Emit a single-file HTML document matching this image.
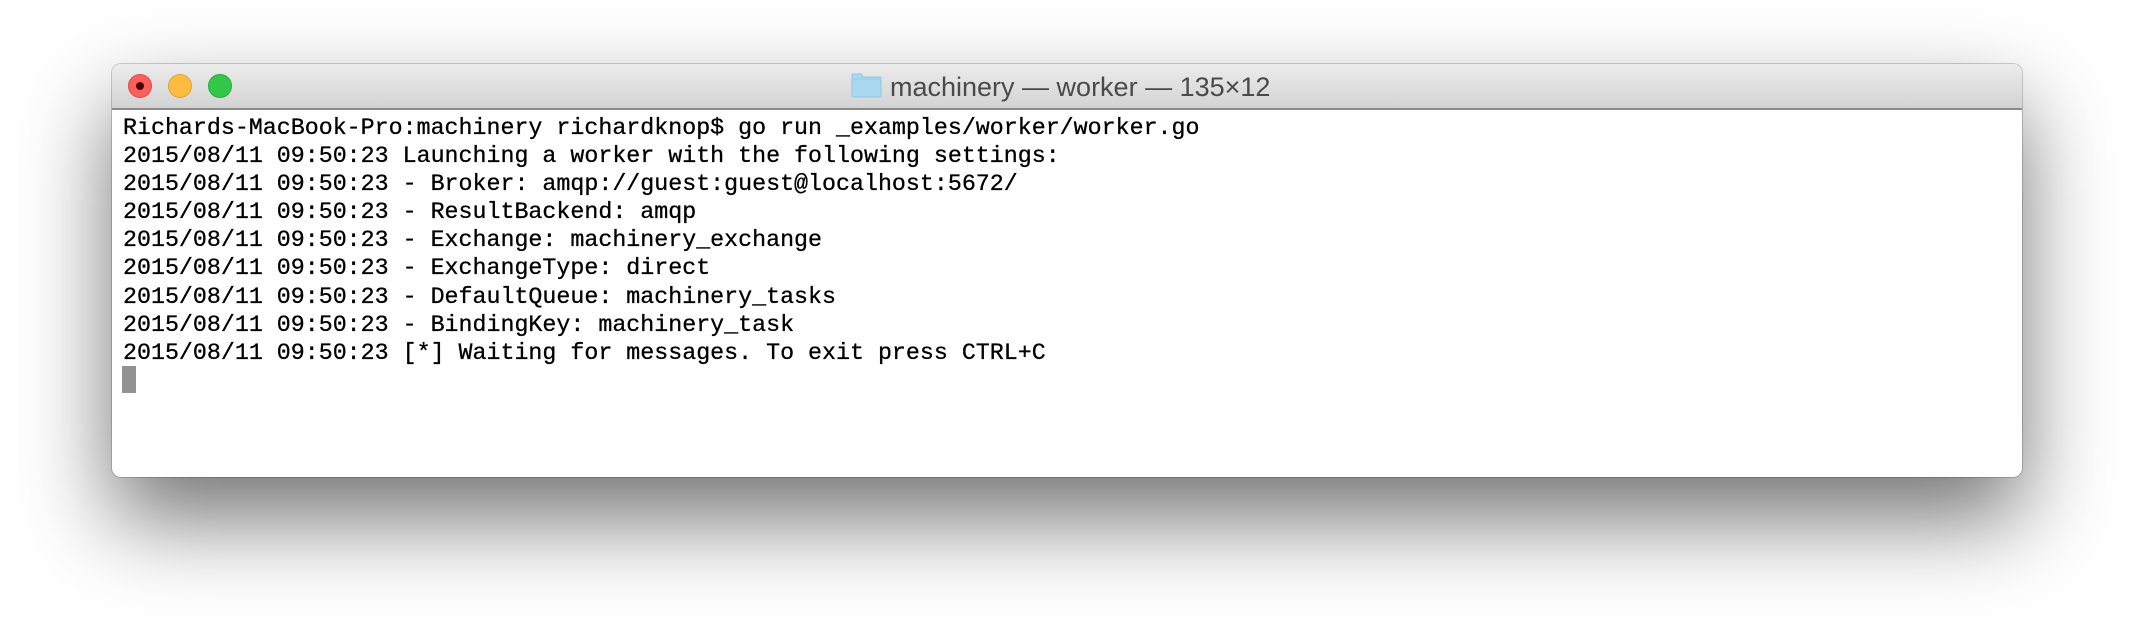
<!DOCTYPE html>
<html><head><meta charset="utf-8"><style>
html,body{margin:0;padding:0;width:2134px;height:638px;background:#fff;overflow:hidden}
.win{position:absolute;left:112px;top:64px;width:1910px;height:413px;border-radius:9px;background:#fff;box-shadow:0 0 0 1px rgba(0,0,0,0.18),0 42px 90px rgba(0,0,0,0.55);overflow:hidden}
.tb{position:absolute;left:0;top:0;width:100%;height:44px;background:linear-gradient(#ececec,#d3d3d3);border-bottom:2px solid #8a8a8a}
.b{position:absolute;top:10px;width:24px;height:24px;border-radius:50%;box-sizing:border-box}
.title{position:absolute;left:778px;top:8px;font-family:"Liberation Sans",sans-serif;font-size:27px;color:#4a4a4a;white-space:nowrap}
pre{position:absolute;left:11px;top:50px;margin:0;font-family:"Liberation Mono",monospace;font-size:23.3px;line-height:28.1px;color:#000;-webkit-text-stroke:0.3px #000}
.cur{position:absolute;left:10px;top:302px;width:14px;height:27px;background:#929292}
</style></head><body>
<div class="win">
<div class="tb">
<div class="b" style="left:16px;background:#fc605c;border:1px solid #de4a46"><div style="position:absolute;left:7px;top:7px;width:8px;height:8px;border-radius:50%;background:#4d0000"></div></div>
<div class="b" style="left:56px;background:#fdbc40;border:1px solid #dea236"></div>
<div class="b" style="left:96px;background:#34c84a;border:1px solid #27aa35"></div>
<svg style="position:absolute;left:739px;top:9px" width="31" height="25" viewBox="0 0 31 25"><path d="M1 2 Q1 1 2 1 H10 L12 4 H29 Q30 4 30 5 V23 Q30 24 29 24 H2 Q1 24 1 23 Z" fill="#a9d8f1" stroke="#8ec6e4" stroke-width="1"/><path d="M1 6 H30" stroke="#98cde9" stroke-width="1"/></svg>
<div class="title">machinery — worker — 135×12</div>
</div>
<pre>Richards-MacBook-Pro:machinery richardknop$ go run _examples/worker/worker.go
2015/08/11 09:50:23 Launching a worker with the following settings:
2015/08/11 09:50:23 - Broker: amqp://guest:guest@localhost:5672/
2015/08/11 09:50:23 - ResultBackend: amqp
2015/08/11 09:50:23 - Exchange: machinery_exchange
2015/08/11 09:50:23 - ExchangeType: direct
2015/08/11 09:50:23 - DefaultQueue: machinery_tasks
2015/08/11 09:50:23 - BindingKey: machinery_task
2015/08/11 09:50:23 [*] Waiting for messages. To exit press CTRL+C</pre>
<div class="cur"></div>
</div>
</body></html>
